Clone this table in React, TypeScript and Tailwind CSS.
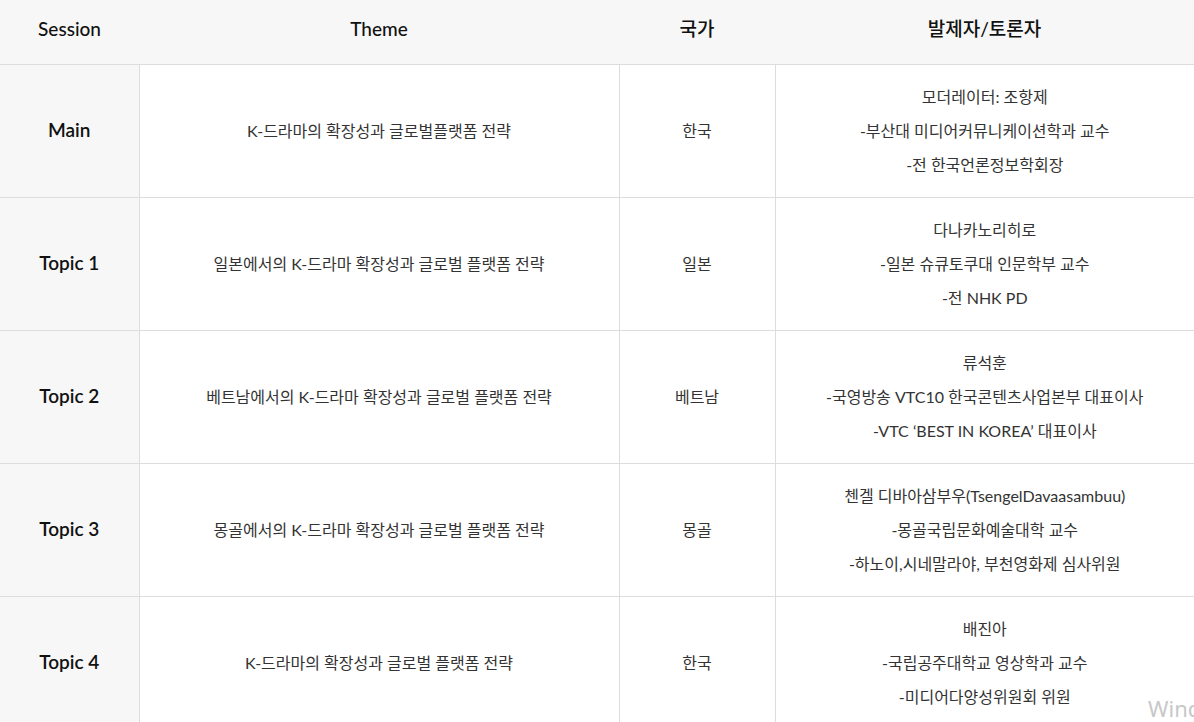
import React from "react";

interface Row {
  session: string;
  theme: string;
  country: string;
  speakers: string[];
}

const rows: Row[] = [
  {
    session: "Main",
    theme: "K-드라마의 확장성과 글로벌플랫폼 전략",
    country: "한국",
    speakers: ["모더레이터: 조항제", "-부산대 미디어커뮤니케이션학과 교수", "-전 한국언론정보학회장"],
  },
  {
    session: "Topic 1",
    theme: "일본에서의 K-드라마 확장성과 글로벌 플랫폼 전략",
    country: "일본",
    speakers: ["다나카노리히로", "-일본 슈큐토쿠대 인문학부 교수", "-전 NHK PD"],
  },
  {
    session: "Topic 2",
    theme: "베트남에서의 K-드라마 확장성과 글로벌 플랫폼 전략",
    country: "베트남",
    speakers: ["류석훈", "-국영방송 VTC10 한국콘텐츠사업본부 대표이사", "-VTC ‘BEST IN KOREA’ 대표이사"],
  },
  {
    session: "Topic 3",
    theme: "몽골에서의 K-드라마 확장성과 글로벌 플랫폼 전략",
    country: "몽골",
    speakers: ["첸겔 디바아삼부우(TsengelDavaasambuu)", "-몽골국립문화예술대학 교수", "-하노이,시네말라야, 부천영화제 심사위원"],
  },
  {
    session: "Topic 4",
    theme: "K-드라마의 확장성과 글로벌 플랫폼 전략",
    country: "한국",
    speakers: ["배진아", "-국립공주대학교 영상학과 교수", "-미디어다양성위원회 위원"],
  },
];

const font = "font-['Lato','Noto_Sans_CJK_KR',sans-serif]";

export default function App() {
  return (
    <div className={`relative w-[1194px] h-[722px] overflow-hidden bg-white ${font}`}>
      <table className="w-[1194px] border-collapse table-fixed">
        <colgroup>
          <col className="w-[139px]" />
          <col className="w-[480px]" />
          <col className="w-[156px]" />
          <col />
        </colgroup>
        <thead>
          <tr className="h-[64px] bg-[#f7f7f7] border-b border-[#dddddd]">
            {["Session", "Theme", "국가", "발제자/토론자"].map((h) => (
              <th key={h} className="text-center text-[19px] font-medium text-[#111] pb-[6px]">
                {h}
              </th>
            ))}
          </tr>
        </thead>
        <tbody>
          {rows.map((r) => (
            <tr key={r.session} className="h-[133px] border-b border-[#dddddd]">
              <td className="bg-[#f7f7f7] border-r border-[#dddddd] text-center text-[19px] font-semibold text-[#111]">
                {r.session}
              </td>
              <td className="border-r border-[#dddddd] text-center text-[16px] text-[#333]">
                {r.theme}
              </td>
              <td className="border-r border-[#dddddd] text-center text-[16px] text-[#333]">
                {r.country}
              </td>
              <td className="text-center text-[16px] text-[#333] leading-[34px]">
                {r.speakers.map((s) => (
                  <div key={s}>{s}</div>
                ))}
              </td>
            </tr>
          ))}
        </tbody>
      </table>
      <div className="absolute left-[1148px] top-[692px] text-[22px] text-[#c8c8c8] font-['Noto_Sans',sans-serif]">
        Windows
      </div>
    </div>
  );
}
